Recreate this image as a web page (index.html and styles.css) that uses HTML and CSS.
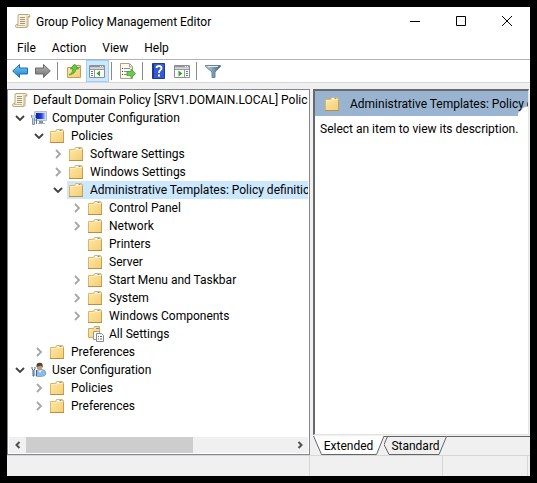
FILE: index.html
```html
<!DOCTYPE html>
<html lang="en">
<head>
<meta charset="utf-8">
<title>Group Policy Management Editor</title>
<link rel="stylesheet" href="styles.css">
</head>
<body>
<svg class="defs" aria-hidden="true">
  <defs>
    <linearGradient id="gold" x1="0" y1="0" x2="1" y2="1"><stop offset="0" stop-color="#ffe9a8"/><stop offset="1" stop-color="#f5cd71"/></linearGradient>
    <linearGradient id="blue" x1="0" y1="0" x2="0" y2="1"><stop offset="0" stop-color="#7fd0fa"/><stop offset="1" stop-color="#1180d0"/></linearGradient>
    <linearGradient id="grey" x1="0" y1="0" x2="0" y2="1"><stop offset="0" stop-color="#b8b8b8"/><stop offset="1" stop-color="#707070"/></linearGradient>
    <linearGradient id="screen" x1="0" y1="0" x2="1" y2="0"><stop offset="0" stop-color="#1020a8"/><stop offset=".6" stop-color="#2444dc"/><stop offset="1" stop-color="#a8c8ff"/></linearGradient>
    <linearGradient id="steel" x1="0" y1="0" x2="1" y2="0"><stop offset="0" stop-color="#c3dbe9"/><stop offset=".5" stop-color="#7f9fb5"/><stop offset="1" stop-color="#466176"/></linearGradient>
    <symbol id="folder" viewBox="0 0 16 16">
      <path d="M.5 14.500V3.500h5l1-2h6v1h1v12z" fill="url(#gold)" stroke="#dcb566"/>
      <path d="M7 2.500h5" stroke="#fff"/><path d="M9.500 2.500h2" stroke="#4a9be0"/>
      <path d="M1 4.500h5.500l1-1H13" fill="none" stroke="#ffefbd"/>
      <path d="M0 14.500h14" stroke="#b98f45"/><path d="M13.500 4v10" stroke="#c9a052"/>
    </symbol>
    <symbol id="scroll" viewBox="0 0 16 16">
      <path d="M4 1.500h9.500q1.500 0 1.500 1.500t-1.500 1.500H13v8q0 2-2 2H2q-1.500 0-1.500-1.500T2 11.500h1V3q0-1.500 1-1.500z" fill="#fbf3d8" stroke="#b5a88a"/>
      <path d="M12 2.500v9q0 2-1.500 2.500" fill="none" stroke="#c9b988"/>
      <path d="M5 4.500h5M5 6.500h5M5 8.500h5M5 10.500h5" stroke="#a09782"/>
      <path d="M2 12.500h8" stroke="#d0b97c"/><path d="M13 3.500h1.500" stroke="#c2a568"/>
    </symbol>
    <symbol id="computer" viewBox="0 0 16 16">
      <path d="M3.500 1.500h12v9h-12z" fill="#d6dbe6" stroke="#b4bccb"/>
      <path d="M5 3h9v6H5z" fill="url(#screen)"/>
      <path d="M8 11h4v2H8z" fill="#8490a5"/><path d="M7 13.500h7" stroke="#a4adbd"/>
      <path d="M.5 5v2.500l1 1v6h2v-6l1-1V5" fill="#c2d6e6" stroke="#5f7f9f" stroke-width=".8"/>
      <path d="M5.500 8v6" stroke="#4a74ac"/>
    </symbol>
    <symbol id="user" viewBox="0 0 16 16">
      <path d="M5 14q0-6 3-6.500h3Q15 8 15 12q-1 2.500-5 2.500Q6 15 5 14z" fill="#8bbbe8" stroke="#6798c4" stroke-width=".7"/>
      <path d="M7 8l2 3 2-3z" fill="#e8f4ff"/>
      <ellipse cx="8.500" cy="5" rx="2.700" ry="3.500" fill="#c29a76"/>
      <path d="M5.500 5Q5 .5 9 .8q3.500 0 2.500 5L10 3.500z" fill="#4f4439"/>
      <path d="M1 5v2l1 1v6h1V8l1-1V5M5.500 8v6" fill="none" stroke="#3f6696"/>
    </symbol>
    <symbol id="all" viewBox="0 0 16 16">
      <path d="M.5 11.500v-9h5l1-2h5v11z" fill="url(#gold)" stroke="#d3a95a"/><path d="M8 2.500h3" stroke="#4a9be0"/>
      <path d="M5.500 5.500h5l2 2v6h-7z" fill="#fff" stroke="#999"/>
      <path d="M8.500 7.500h5l2 2v6h-7z" fill="#fff" stroke="#888"/>
      <path d="M10 10.500h1m1 0h2M10 13h1m1 0h2" stroke="#666"/>
    </symbol>
    <symbol id="open" viewBox="0 0 10 10"><path d="M1 3l4 4 4-4" fill="none" stroke="#404040" stroke-width="1.800"/></symbol>
    <symbol id="shut" viewBox="0 0 10 10"><path d="M3 1l4 4-4 4" fill="none" stroke="#a6a6a6" stroke-width="1.800"/></symbol>
    <symbol id="arrow" viewBox="0 0 16 16"><path d="M.7 8L7.500 1.500V5h8v6h-8v3.500z"/></symbol>
    <symbol id="console" viewBox="0 0 16 16">
      <path d="M.5 2.500h15v12H.5z" fill="#fff" stroke="#8a8f96"/><path d="M1 3.500h14" stroke="#8d949d" stroke-width="2"/>
      <path d="M11 3.500h1m1 0h1" stroke="#fff"/><path d="M1 5.500h14" stroke="#d5d9dd"/><path d="M1 6.500h14" stroke="#999"/>
    </symbol>
  </defs>
</svg>

<main class="window">
  <header class="titlebar">
    <svg class="icon"><use href="#scroll"/></svg>
    <h1>Group Policy Management Editor</h1>
    <button class="caption" aria-label="Minimize"><svg viewBox="0 0 10 10"><path d="M0 5.500h10"/></svg></button>
    <button class="caption" aria-label="Maximize"><svg viewBox="0 0 10 10"><path d="M.5.5h9v9h-9z"/></svg></button>
    <button class="caption" aria-label="Close"><svg viewBox="0 0 10 10"><path d="M0 0l10 10M10 0L0 10"/></svg></button>
  </header>

  <nav class="menubar" aria-label="Menu">
    <button>File</button><button>Action</button><button>View</button><button>Help</button>
  </nav>

  <div class="toolbar" role="toolbar" aria-label="Tools">
    <button aria-label="Back"><svg class="icon" fill="url(#blue)" stroke="#2d6d9d"><use href="#arrow"/></svg></button>
    <button aria-label="Forward"><svg class="icon flip" fill="url(#grey)" stroke="#696969"><use href="#arrow"/></svg></button>
    <span class="rule"></span>
    <button aria-label="Up one level"><svg class="icon" viewBox="0 0 16 16">
      <path d="M1.500 14.500V4.500h5l1-2h7v12z" fill="url(#gold)" stroke="#c99d50"/><path d="M11 4.500h3" stroke="#4a9be0"/>
      <path d="M3 12q4-2 4-6H4.500L8.500 1l4 5H10q-.5 5-7 6z" fill="#5bcf3e" stroke="#339326" stroke-width=".7"/></svg></button>
    <button class="pressed" aria-label="Show console tree" aria-pressed="true"><svg class="icon" viewBox="0 0 16 16">
      <use href="#console"/><path d="M5.500 7v7" stroke="#999"/><path d="M2 8.500h2M2 10.500h2M2 12.500h2" stroke="#4e7fb5"/><path d="M11 7.500v6l-3.500-3z" fill="#35a52a"/></svg></button>
    <span class="rule"></span>
    <button aria-label="Export list"><svg class="icon" viewBox="0 0 16 16">
      <path d="M.5.5h9l3 3v12H.5z" fill="#fffbe9" stroke="#a6a08c"/><path d="M9.500 1v3h3" fill="none" stroke="#a6a08c"/>
      <path d="M2 5.500h1M2 8.500h1M2 11.500h1" stroke="#333"/><path d="M4 5.500h6M4 8.500h5M4 11.500h5" stroke="#8585b8"/>
      <path d="M7 8.500h4V6l4.500 4.500L11 15v-2.500H7z" fill="#65cf46" stroke="#389a2b" stroke-width=".7"/></svg></button>
    <span class="rule"></span>
    <button aria-label="Help"><svg class="icon" viewBox="0 0 16 16">
      <path d="M1.500.5h12v15h-12z" fill="#365bd0" stroke="#203994"/><path d="M2.500 1v14" stroke="#1b348d"/>
      <path d="M5.500 5q.2-2 2.500-2t2.500 2Q10.500 6.500 9 7.500 8 8.300 8 10" fill="none" stroke="#fff" stroke-width="1.800"/><path d="M7 11.500h2v2H7z" fill="#fff"/></svg></button>
    <button aria-label="Show action pane"><svg class="icon" viewBox="0 0 16 16">
      <use href="#console"/><path d="M10.500 7v7" stroke="#999"/><path d="M12 8.500h2M12 10.500h2M12 12.500h2" stroke="#4e7fb5"/><path d="M4.500 7.500v6l4-3z" fill="#35a52a"/></svg></button>
    <span class="rule"></span>
    <button aria-label="Filter"><svg class="icon" viewBox="0 0 16 16">
      <path d="M.5 2.500h15v1L10 9v5.500H7V9L.5 3.500z" fill="url(#steel)" stroke="#6b8597"/><path d="M3 3.500h10" stroke="#e0edf5"/></svg></button>
  </div>

  <div class="panes">
    <section class="tree-pane" aria-label="Console tree">
      <ul class="tree">
        <li><div class="row"><span class="label"><svg class="icon"><use href="#scroll"/></svg>Default Domain Policy [SRV1.DOMAIN.LOCAL] Polic</span></div>
          <ul class="top">
            <li><div class="row"><svg class="twist"><use href="#open"/></svg><span class="label"><svg class="icon"><use href="#computer"/></svg>Computer Configuration</span></div>
              <ul>
                <li><div class="row"><svg class="twist"><use href="#open"/></svg><span class="label"><svg class="icon"><use href="#folder"/></svg>Policies</span></div>
                  <ul>
                    <li><div class="row"><svg class="twist"><use href="#shut"/></svg><span class="label"><svg class="icon"><use href="#folder"/></svg>Software Settings</span></div></li>
                    <li><div class="row"><svg class="twist"><use href="#shut"/></svg><span class="label"><svg class="icon"><use href="#folder"/></svg>Windows Settings</span></div></li>
                    <li><div class="row"><svg class="twist"><use href="#open"/></svg><span class="label selected"><svg class="icon"><use href="#folder"/></svg>Administrative Templates: Policy definitio</span></div>
                      <ul>
                        <li><div class="row"><svg class="twist"><use href="#shut"/></svg><span class="label"><svg class="icon"><use href="#folder"/></svg>Control Panel</span></div></li>
                        <li><div class="row"><svg class="twist"><use href="#shut"/></svg><span class="label"><svg class="icon"><use href="#folder"/></svg>Network</span></div></li>
                        <li><div class="row"><svg class="twist"></svg><span class="label"><svg class="icon"><use href="#folder"/></svg>Printers</span></div></li>
                        <li><div class="row"><svg class="twist"></svg><span class="label"><svg class="icon"><use href="#folder"/></svg>Server</span></div></li>
                        <li><div class="row"><svg class="twist"><use href="#shut"/></svg><span class="label"><svg class="icon"><use href="#folder"/></svg>Start Menu and Taskbar</span></div></li>
                        <li><div class="row"><svg class="twist"><use href="#shut"/></svg><span class="label"><svg class="icon"><use href="#folder"/></svg>System</span></div></li>
                        <li><div class="row"><svg class="twist"><use href="#shut"/></svg><span class="label"><svg class="icon"><use href="#folder"/></svg>Windows Components</span></div></li>
                        <li><div class="row"><svg class="twist"></svg><span class="label"><svg class="icon"><use href="#all"/></svg>All Settings</span></div></li>
                      </ul>
                    </li>
                  </ul>
                </li>
                <li><div class="row"><svg class="twist"><use href="#shut"/></svg><span class="label"><svg class="icon"><use href="#folder"/></svg>Preferences</span></div></li>
              </ul>
            </li>
            <li><div class="row"><svg class="twist"><use href="#open"/></svg><span class="label"><svg class="icon"><use href="#user"/></svg>User Configuration</span></div>
              <ul>
                <li><div class="row"><svg class="twist"><use href="#shut"/></svg><span class="label"><svg class="icon"><use href="#folder"/></svg>Policies</span></div></li>
                <li><div class="row"><svg class="twist"><use href="#shut"/></svg><span class="label"><svg class="icon"><use href="#folder"/></svg>Preferences</span></div></li>
              </ul>
            </li>
          </ul>
        </li>
      </ul>
      <div class="scrollbar">
        <button aria-label="Scroll left"><svg viewBox="0 0 8 8"><path d="M5.500 1l-3 3 3 3"/></svg></button>
        <div class="track"><div class="thumb"></div></div>
        <button aria-label="Scroll right"><svg viewBox="0 0 8 8"><path d="M2.500 1l3 3-3 3"/></svg></button>
      </div>
    </section>

    <section class="detail-pane" aria-label="Details">
      <div class="detail">
        <h2><svg class="icon"><use href="#folder"/></svg><span>Administrative Templates: Policy d</span></h2>
        <p>Select an item to view its description.</p>
      </div>
      <div class="tabs" role="tablist">
        <button class="tab extended" role="tab" aria-selected="true"><svg viewBox="0 0 71 19"><path d="M0 0l8 18.500h56L71 0z" fill="#fff"/><path d="M.5 0l8 18.500h55L71 0" fill="none" stroke="#646464"/></svg><span>Extended</span></button>
        <button class="tab standard" role="tab" aria-selected="false"><svg viewBox="0 0 63 19"><path d="M0 .5h62.500L55 18.500H5L0 8.500 3.500.5" fill="#f0f0f0" stroke="#646464"/></svg><span>Standard</span></button>
        <span class="tab-line"></span>
      </div>
    </section>
  </div>

  <footer class="status"><span></span><span></span><span></span></footer>
</main>
</body>
</html>
```
FILE: styles.css
```css
* { box-sizing: border-box; }
body {
  margin: 0;
  padding: 7px;
  height: 100vh;
  background: #000;
  color: #000;
  font: 12px/18px Roboto, "Open Sans", sans-serif;
}
button { border: 0; padding: 0; background: none; color: inherit; font: inherit; }
h1, h2, p, ul { margin: 0; padding: 0; font: inherit; }
ul { list-style: none; }
svg { display: block; flex: none; }
.defs { position: absolute; width: 0; height: 0; }
.icon { width: 16px; height: 16px; }
.flip { transform: scaleX(-1); }

.window { display: flex; flex-direction: column; height: 100%; background: #f0f0f0; }

.titlebar { display: flex; height: 29px; padding-left: 8px; background: #fff; }
.titlebar .icon { margin-top: 6px; }
.titlebar h1 { flex: 1; padding: 6px 0 0 5px; white-space: nowrap; }
.caption { display: grid; place-items: center; width: 46px; height: 28px; }
.caption svg { width: 10px; height: 10px; fill: none; stroke: #000; }

.menubar { display: flex; height: 24px; padding: 1px 2px 0; background: #fff; border-bottom: 1px solid #b4b4b8; }
.menubar button { padding: 0 8px; }

.toolbar { display: flex; height: 23px; padding-left: 2px; background: #fff; border-bottom: 1px solid #d8d8d8; }
.toolbar button { width: 23px; height: 22px; padding: 3px 4px 3px 3px; }
.toolbar .pressed { background: #cce8ff; box-shadow: inset 0 0 0 1px #99d1ff; }
.rule { width: 1px; height: 18px; margin: 2px 5px 2px 2px; background: #8a8a8a; }

.panes {
  flex: 1;
  display: grid;
  grid-template-columns: minmax(0, 303fr) minmax(0, 217fr);
  gap: 3px;
  min-height: 0;
  padding-top: 6px;
}
.tree-pane { display: flex; flex-direction: column; min-height: 0; padding: 1px; background: #fff; border: 1px solid #828790; }
.tree { flex: 1; overflow: hidden; padding-left: 1px; }
.tree ul { padding-left: 19px; }
.tree .top { padding-left: 0; }
.row { display: flex; height: 18px; }
.twist { width: 10px; height: 10px; margin: 4px; margin-left: 5px; }
.label { flex: 1; display: flex; align-items: center; gap: 5px; min-width: 0; padding-left: 2px; overflow: hidden; white-space: nowrap; }
.selected { background: #cce8ff; }

.scrollbar { display: flex; height: 16px; background: #f0f0f0; }
.scrollbar button { display: grid; place-items: center; width: 17px; }
.scrollbar svg { width: 8px; height: 8px; fill: none; stroke: #505050; stroke-width: 2; }
.track { flex: 1; }
.thumb { width: 63%; height: 100%; background: #cdcdcd; }

.detail-pane { display: flex; flex-direction: column; min-height: 0; }
.detail {
  flex: 1;
  margin-right: 1px;
  background: #fff;
  border: solid #e3e3e3;
  border-width: 2px 1px 1px 2px;
  border-top-color: #696969;
  border-left-color: #696969;
}
.detail h2 { position: relative; display: flex; align-items: center; gap: 9px; height: 25px; padding-left: 10px; overflow: hidden; white-space: nowrap; }
.detail h2::before {
  content: "";
  position: absolute;
  inset: 0;
  background: #99b4d1;
  clip-path: polygon(0 0, 100% 0, 100% 15px, calc(100% - 5px) 17px, calc(100% - 10px) 22px, calc(100% - 10px) 100%, 0 100%);
}
.detail h2 > * { position: relative; }
.detail p { padding: 4px 5px; }

.tabs { display: flex; height: 20px; padding-top: 1px; }
.tab { position: relative; height: 19px; }
.tab svg { position: absolute; inset: 0; width: 100%; height: 100%; }
.tab span { position: relative; }
.extended { width: 71px; }
.standard { width: 63px; }
.tab-line { flex: 1; border-top: 1px solid #646464; }

.status { display: grid; grid-template-columns: 303fr 133fr 85fr 2px; height: 21px; border-top: 1px solid #d7d7d7; }
.status span { border-right: 1px solid #d7d7d7; }
```
